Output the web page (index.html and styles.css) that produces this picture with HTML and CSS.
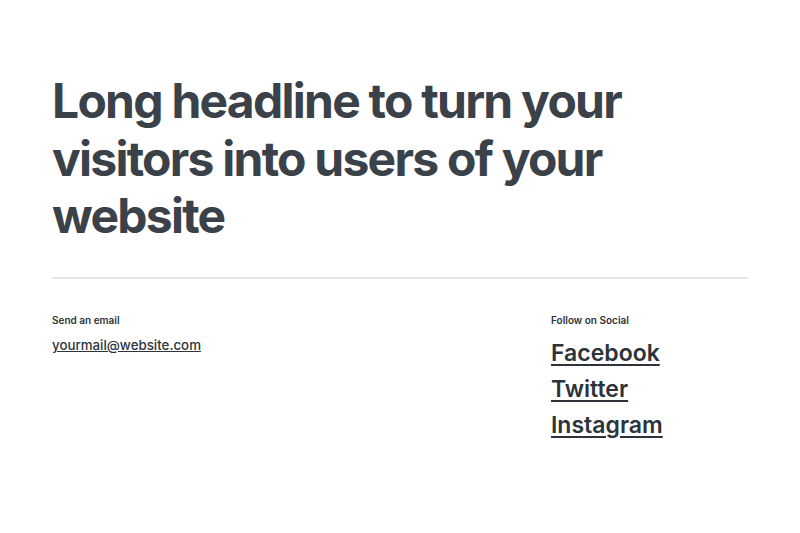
FILE: index.html
```html
<!DOCTYPE html>
<html lang="en">
<head>
<meta charset="utf-8">
<link rel="stylesheet" href="styles.css">
</head>
<body>
<main class="page">
  <h1 class="headline">Long headline to turn your visitors into users of your website</h1>
  <hr class="divider">
  <section class="footer-grid">
    <div class="col">
      <p class="label">Send an email</p>
      <a class="email" href="#">yourmail@website.com</a>
    </div>
    <div class="col">
      <p class="label">Follow on Social</p>
      <ul class="social">
        <li><a href="#">Facebook</a></li>
        <li><a href="#">Twitter</a></li>
        <li><a href="#">Instagram</a></li>
      </ul>
    </div>
  </section>
</main>
</body>
</html>
```
FILE: styles.css
```css
html, body {
  margin: 0;
  padding: 0;
  background: #ffffff;
}
body {
  font-family: "Inter", "Noto Sans", sans-serif;
  color: #3a4149;
}
.page {
  padding: 72px 52px 0 52px;
}
.headline {
  margin: 0;
  font-size: 48px;
  line-height: 1.2;
  font-weight: 700;
  letter-spacing: -1.75px;
  color: #3a4149;
  max-width: 600px;
}
.divider {
  border: 0;
  height: 2px;
  background: #e3e5e7;
  margin: 32px 0 0 0;
}
.footer-grid {
  display: grid;
  grid-template-columns: 1fr 197px;
  padding-top: 35px;
}
.label {
  margin: 0;
  font-size: 10px;
  font-weight: 600;
  color: #2d333a;
}
.email {
  display: inline-block;
  margin-top: 11px;
  font-size: 13.3px;
  font-weight: 500;
  color: #2d333a;
  text-decoration: underline;
}
.social {
  list-style: none;
  margin: 9px 0 0 0;
  padding: 0;
}
.social li {
  font-size: 23px;
  line-height: 36px;
}
.social a {
  font-weight: 600;
  color: #2d333a;
  text-decoration: underline;
  text-decoration-thickness: 2px;
  text-underline-offset: 3px;
}
```
